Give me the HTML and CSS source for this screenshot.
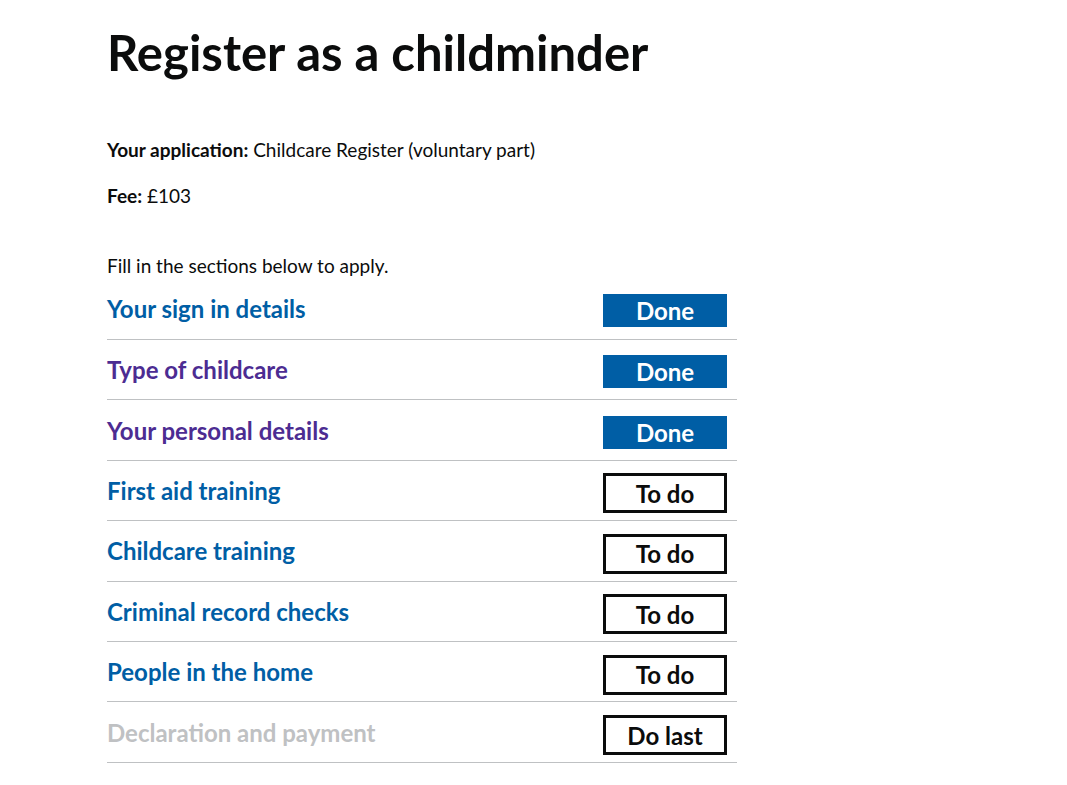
FILE: index.html
```html
<!DOCTYPE html>
<html lang="en">
<head>
<meta charset="utf-8">
<title>Register as a childminder</title>
<link rel="stylesheet" href="styles.css">
</head>
<body>
<main class="page">
  <h1 class="title">Register as a childminder</h1>
  <p class="meta"><strong>Your application:</strong> Childcare Register (voluntary part)</p>
  <p class="meta"><strong>Fee:</strong> £103</p>
  <p class="intro">Fill in the sections below to apply.</p>
  <ul class="tasks">
    <li class="task"><a class="task-link" href="#">Your sign in details</a><span class="badge badge-done">Done</span></li>
    <li class="task"><a class="task-link visited" href="#">Type of childcare</a><span class="badge badge-done">Done</span></li>
    <li class="task"><a class="task-link visited" href="#">Your personal details</a><span class="badge badge-done">Done</span></li>
    <li class="task"><a class="task-link" href="#">First aid training</a><span class="badge badge-todo">To do</span></li>
    <li class="task"><a class="task-link" href="#">Childcare training</a><span class="badge badge-todo">To do</span></li>
    <li class="task"><a class="task-link" href="#">Criminal record checks</a><span class="badge badge-todo">To do</span></li>
    <li class="task"><a class="task-link" href="#">People in the home</a><span class="badge badge-todo">To do</span></li>
    <li class="task"><span class="task-link disabled">Declaration and payment</span><span class="badge badge-todo">Do last</span></li>
  </ul>
</main>
</body>
</html>
```

FILE: styles.css
```css
* { box-sizing: border-box; }
body {
  margin: 0;
  background: #fff;
  color: #0b0c0c;
  font-family: "Lato", "Liberation Sans", sans-serif;
}
.page {
  padding: 22px 0 0 107px;
}
.title {
  margin: 0 0 55px;
  font-size: 49px;
  line-height: 60px;
  font-weight: 700;
}
.meta {
  margin: 0 0 21px;
  font-size: 19px;
  line-height: 25px;
}
.meta strong { font-weight: 700; }
.intro {
  margin: 45px 0 0;
  font-size: 19px;
  line-height: 25px;
}
.tasks {
  list-style: none;
  margin: 0;
  padding: 0;
  width: 630px;
}
.task {
  display: flex;
  align-items: center;
  justify-content: space-between;
  height: 60.4px;
  border-bottom: 1px solid #bfc1c3;
}
.task:first-child { height: 62px; }
.task-link {
  font-size: 24px;
  font-weight: 700;
  color: #005ea5;
  text-decoration: none;
}
.task-link.visited { color: #4c2c92; }
.task-link.disabled { color: #bfc1c3; }
.badge {
  width: 124px;
  margin-right: 10px;
  display: flex;
  align-items: center;
  justify-content: center;
  font-size: 24px;
  font-weight: 700;
}
.badge-done {
  height: 33px;
  margin-top: 4px;
  background: #005ea5;
  color: #fff;
}
.badge-todo {
  height: 40px;
  margin-top: 6px;
  border: 3px solid #0b0c0c;
  color: #0b0c0c;
}
```
